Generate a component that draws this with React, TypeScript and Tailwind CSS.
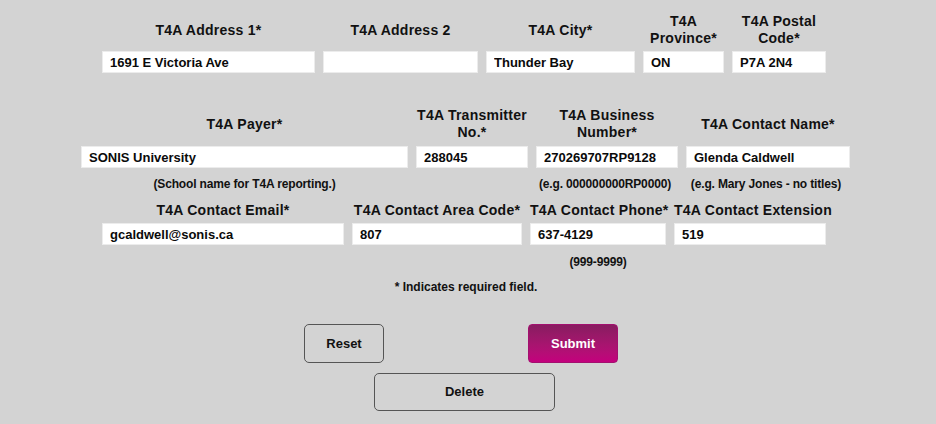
import React from 'react';

const label = "font-['Liberation_Sans',Arial,sans-serif] text-[14px] font-bold leading-[17px] tracking-[0.25px] text-[#111] text-center";
const hint = "font-['Liberation_Sans',Arial,sans-serif] text-[12px] font-bold leading-[16px] tracking-[-0.15px] text-[#111] text-center whitespace-nowrap";

function Field({ value }: { value: string }) {
  return (
    <input
      readOnly
      value={value}
      className="h-[22px] w-full border border-[#ececec] bg-white px-[7px] font-['Liberation_Sans',Arial,sans-serif] text-[13px] font-bold text-[#0a0a0a] outline-none"
    />
  );
}

export default function App() {
  return (
    <div className="min-h-[424px] w-[936px] bg-[#d3d3d3] pr-2 pt-[13px]">
      <div className="flex flex-col items-center">
        {/* address */}
        <div className="grid grid-cols-[213px_155px_149px_81px_94px] items-center gap-x-2">
          <div className={label}>T4A Address 1*</div>
          <div className={label}>T4A Address 2</div>
          <div className={label}>T4A City*</div>
          <div className={label}>T4A<br />Province*</div>
          <div className={label}>T4A Postal<br />Code*</div>
          <div className="col-span-5 h-1" />
          <Field value="1691 E Victoria Ave" />
          <Field value="" />
          <Field value="Thunder Bay" />
          <Field value="ON" />
          <Field value="P7A 2N4" />
        </div>

        {/* payer */}
        <div className="mt-[34px] ml-[3px] grid grid-cols-[327px_112px_142px_164px] items-center gap-x-2">
          <div className={label}>T4A Payer*</div>
          <div className={label}>T4A Transmitter<br />No.*</div>
          <div className={label}>T4A Business<br />Number*</div>
          <div className={label}>T4A Contact Name*</div>
          <div className="col-span-4 h-[5px]" />
          <Field value="SONIS University" />
          <Field value="288045" />
          <Field value="270269707RP9128" />
          <Field value="Glenda Caldwell" />
          <div className={`${hint} mt-2`}>(School name for T4A reporting.)</div>
          <div />
          <div className={`${hint} mt-2 -ml-1`}>(e.g. 000000000RP0000)</div>
          <div className={`${hint} mt-2 -ml-1`}>(e.g. Mary Jones - no titles)</div>
        </div>

        {/* contact */}
        <div className="mt-[10px] grid grid-cols-[242px_170px_136px_152px] items-center gap-x-2">
          <div className={`${label} whitespace-nowrap`}>T4A Contact Email*</div>
          <div className={`${label} whitespace-nowrap`}>T4A Contact Area Code*</div>
          <div className={`${label} whitespace-nowrap`}>T4A Contact Phone*</div>
          <div className={`${label} whitespace-nowrap`}>T4A Contact Extension</div>
          <div className="col-span-4 h-1" />
          <Field value="gcaldwell@sonis.ca" />
          <Field value="807" />
          <Field value="637-4129" />
          <Field value="519" />
          <div />
          <div />
          <div className={`${hint} mt-[9px]`}>(999-9999)</div>
          <div />
        </div>

        <div className={`${hint} mt-[9px] ml-1 tracking-normal`}>* Indicates required field.</div>

        <div className="mt-[29px] flex gap-[144px] pr-[6px]">
          <button className="h-[39px] w-[80px] rounded-[5px] border border-[#555] font-['Liberation_Sans',Arial,sans-serif] text-[13px] font-bold text-[#111]">
            Reset
          </button>
          <button className="h-[39px] w-[90px] rounded-[4px] border border-[#a3106f] bg-gradient-to-b from-[#881c60] to-[#c4007d] font-['Liberation_Sans',Arial,sans-serif] text-[13px] font-bold text-white">
            Submit
          </button>
        </div>

        <button className="mt-[10px] ml-[1px] h-[38px] w-[181px] rounded-[5px] border border-[#555] font-['Liberation_Sans',Arial,sans-serif] text-[13px] font-bold text-[#111]">
          Delete
        </button>
      </div>
    </div>
  );
}
